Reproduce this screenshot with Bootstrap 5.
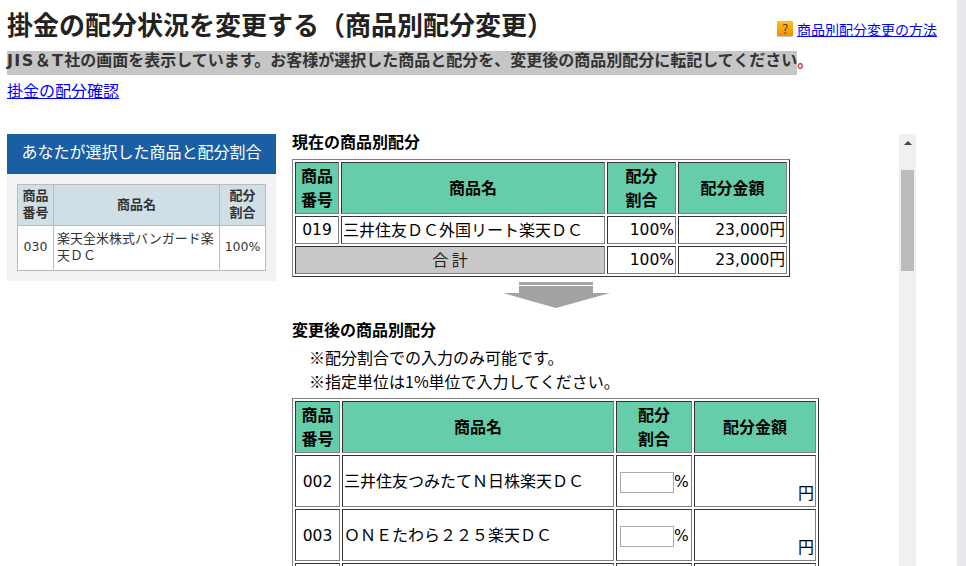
<!DOCTYPE html>
<html lang="ja">
<head>
  <meta charset="UTF-8" />
  <title>掛金の配分状況を変更する</title>
  <meta name="viewport" content="width=device-width, initial-scale=1" />
  <link href="https://cdn.jsdelivr.net/npm/bootstrap@5.3.0/dist/css/bootstrap.min.css" rel="stylesheet" />
  <style>
    html, body { height: 566px; overflow: hidden; }
    body { font-family: "Noto Sans CJK JP", sans-serif; font-size: 16px; line-height: 24px; color: #000; background: #fff; }
    a { color: #00f; }
    .page-body { width: 957px; height: 566px; overflow: hidden; padding: 8px 0 0 7px; }
    .page-bar { width: 9px; height: 566px; background: #e8e8ec; }
    .head-row { width: 930px; height: 43px; }
    .page-title { font-size: 26px; line-height: 32px; font-weight: 700; color: #222; margin: 0; }
    .help-link { font-size: 14px; line-height: 18px; margin-top: 12px; }
    .help-icon { width: 16px; height: 16px; background: linear-gradient(#ffc21c, #f58c00); border-bottom: 1px solid #c9c9c9; color: #444; font-size: 13px; line-height: 15px; }
    .lead-note { font-family: "DejaVu Sans", "Noto Sans CJK JP", sans-serif; font-weight: 700; color: #333; background: #c6c6c6; line-height: 19px; padding-bottom: 5px; }
    .lead-latin { letter-spacing: 1.4px; }
    .lead-dot { color: #c33; font-weight: 700; line-height: 19px; }
    .confirm-link { margin-top: 3px; }
    .main-row { margin-top: 27px; }
    .side-box { width: 269px; height: 147px; margin-top: 5px; background: #f2f2f2; }
    .side-title { height: 40px; background: #1a5fa3; color: #fff; font-size: 16px; line-height: 34px; }
    .side-tbl { width: 248px; margin: 10px 0 0 10px; table-layout: fixed; font-size: 13px; line-height: 17px; color: #333; background: #fff; }
    .side-tbl th, .side-tbl td { border: 1px solid #bbb; padding: 3px 3px 7px; }
    .side-tbl th { background: #d0dee6; text-align: center; font-weight: 700; padding: 1px 0 5px; }
    .side-num { font-family: "DejaVu Sans", "Noto Sans CJK JP", sans-serif; font-size: 12.5px; }
    .side-tbl td.side-num { padding: 3px 0 7px; }
    .list-pane { width: 607px; height: 437px; overflow: hidden; margin-left: 16px; }
    .sec-label { font-weight: 700; line-height: 24px; }
    .sec-first { margin-bottom: 6px; }
    .sec-second { margin-top: 9px; }
    .notes { padding-left: 17px; margin-top: 4px; margin-bottom: 5px; }
    .alloc-tbl { table-layout: fixed; border-collapse: separate; border-spacing: 2px; border: 1px solid; border-color: #808080 #333 #333 #808080; }
    .alloc-tbl th, .alloc-tbl td { border: 1px solid; border-color: #333 #808080 #808080 #333; line-height: 24px; padding: 0 1px 2px; }
    .alloc-tbl th { background: #66cdaa; text-align: center; font-weight: 700; }
    .alloc-tbl .sum-cell { background: #c9c9c9; text-align: center; color: #222; }
    .tbl-now { width: 498px; }
    .tbl-new { width: 527px; }
    .num-cell { font-family: "DejaVu Sans", "Noto Sans CJK JP", sans-serif; font-size: 15.5px; }
    .alloc-tbl td.num-cell { padding: 1px; }
    .alloc-tbl .row-new td.num-cell { padding: 2px 1px 0; }
    .row-now td { height: 28px; }
    .row-new td { height: 52px; }
    .arrow-pic { display: block; margin: 4px 0 0 211px; }
    .rate-input.form-control { display: inline-block; width: 54px; height: 21px; min-height: 0; margin-left: 2px; padding: 0 2px; border: 1px solid #aaa; border-radius: 0; vertical-align: middle; }
    .scroll-rail { width: 17px; height: 432px; margin-top: 5px; background: #f0f0f0; }
    .scroll-thumb { width: 13px; height: 101px; background: #bcbcbc; margin: 32px auto 0; }
    .scroll-up { width: 0; height: 0; margin: 0 auto; border-left: 4px solid transparent; border-right: 4px solid transparent; border-bottom: 4px solid #444; transform: translateY(7px); }
  </style>
</head>
<body class="m-0">
  <div class="d-flex">
    <div class="page-body">
      <div class="head-row d-flex justify-content-between">
        <h1 class="page-title">掛金の配分状況を変更する（商品別配分変更）</h1>
        <div class="help-link d-flex align-items-center align-self-start gap-1">
          <span class="help-icon d-inline-block text-center">?</span>
          <a href="#">商品別配分変更の方法</a>
        </div>
      </div>
      <div class="d-flex"><span class="lead-note"><span class="lead-latin">JIS＆T</span>社の画面を表示しています。お客様が選択した商品と配分を、変更後の商品別配分に転記してください</span><span class="lead-dot">。</span></div>
      <div class="confirm-link"><a href="#">掛金の配分確認</a></div>

      <div class="main-row d-flex align-items-start">
        <div class="side-box">
          <div class="side-title text-center">あなたが選択した商品と配分割合</div>
          <table class="side-tbl">
            <colgroup><col style="width:36px"><col style="width:166px"><col style="width:46px"></colgroup>
            <tr><th>商品<br>番号</th><th>商品名</th><th>配分<br>割合</th></tr>
            <tr>
              <td class="side-num text-center">030</td>
              <td>楽天全米株式バンガード楽天ＤＣ</td>
              <td class="side-num text-center">100%</td>
            </tr>
          </table>
        </div>

        <div class="list-pane">
          <div class="sec-label sec-first">現在の商品別配分</div>
          <table class="alloc-tbl tbl-now">
            <colgroup><col style="width:44px"><col style="width:264px"><col style="width:69px"><col style="width:109px"></colgroup>
            <tr><th>商品<br>番号</th><th>商品名</th><th>配分<br>割合</th><th>配分金額</th></tr>
            <tr class="row-now">
              <td class="num-cell text-center">019</td>
              <td>三井住友ＤＣ外国リート楽天ＤＣ</td>
              <td class="num-cell text-end">100%</td>
              <td class="num-cell text-end">23,000円</td>
            </tr>
            <tr class="row-now">
              <td colspan="2" class="sum-cell">合 計</td>
              <td class="num-cell text-end">100%</td>
              <td class="num-cell text-end">23,000円</td>
            </tr>
          </table>

          <svg class="arrow-pic" width="107" height="27" viewBox="0 0 107 27">
            <rect x="16" y="1" width="74" height="3" fill="#a3a3a3" />
            <polygon points="16,5 90,5 90,12 107,12 53,27 0,12 16,12" fill="#a3a3a3" />
          </svg>

          <div class="sec-label sec-second">変更後の商品別配分</div>
          <div class="notes">
            <div>※配分割合での入力のみ可能です。</div>
            <div>※指定単位は1%単位で入力してください。</div>
          </div>
          <table class="alloc-tbl tbl-new">
            <colgroup><col style="width:45px"><col style="width:272px"><col style="width:76px"><col style="width:122px"></colgroup>
            <tr><th>商品<br>番号</th><th>商品名</th><th>配分<br>割合</th><th>配分金額</th></tr>
            <tr class="row-new">
              <td class="num-cell text-center">002</td>
              <td>三井住友つみたてＮ日株楽天ＤＣ</td>
              <td class="num-cell text-nowrap"><input type="text" class="rate-input form-control" />%</td>
              <td class="text-end align-bottom">円</td>
            </tr>
            <tr class="row-new">
              <td class="num-cell text-center">003</td>
              <td>ＯＮＥたわら２２５楽天ＤＣ</td>
              <td class="num-cell text-nowrap"><input type="text" class="rate-input form-control" />%</td>
              <td class="text-end align-bottom">円</td>
            </tr>
            <tr class="row-new">
              <td></td>
              <td></td>
              <td></td>
              <td></td>
            </tr>
          </table>
        </div>

        <div class="scroll-rail">
          <div class="scroll-up"></div>
          <div class="scroll-thumb"></div>
        </div>
      </div>
    </div>
    <div class="page-bar"></div>
  </div>
  <script src="https://cdn.jsdelivr.net/npm/bootstrap@5.3.0/dist/js/bootstrap.bundle.min.js"></script>
</body>
</html>
